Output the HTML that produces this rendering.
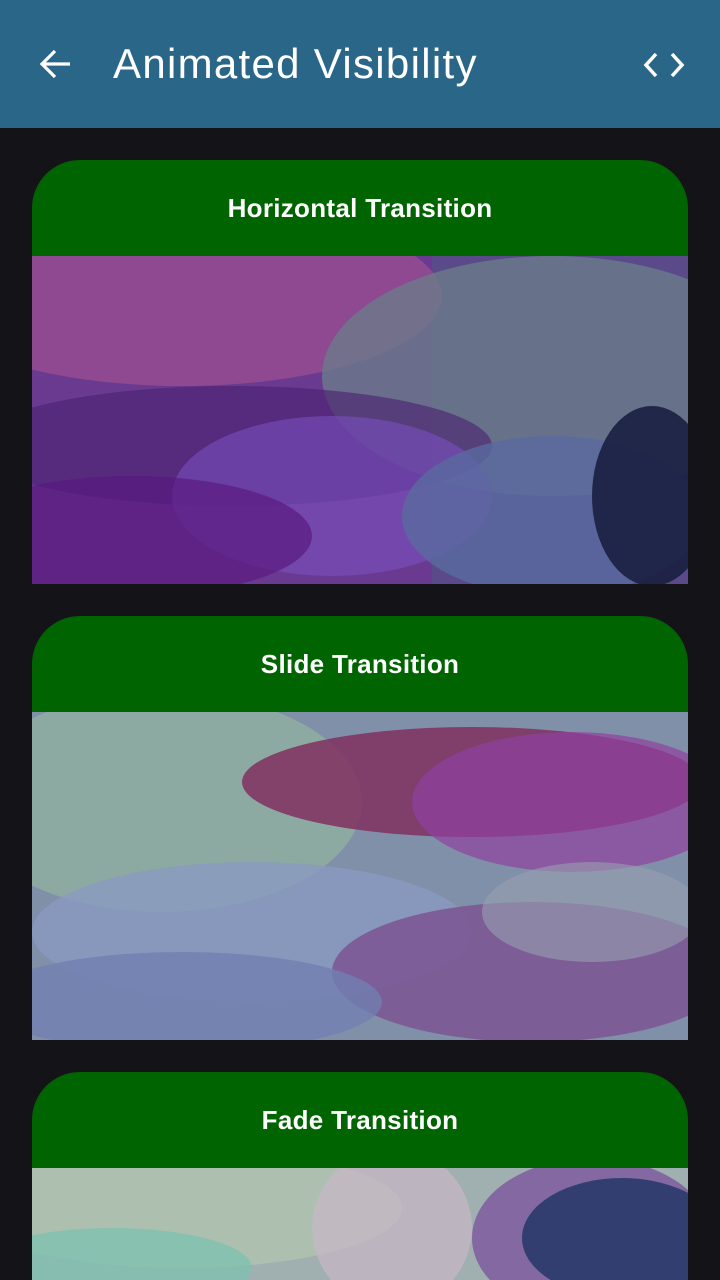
<!DOCTYPE html>
<html><head><meta charset="utf-8"><style>
body{margin:0;width:720px;height:1280px;overflow:hidden;background:#141318;font-family:"Liberation Sans",sans-serif;position:relative}
.bar{position:absolute;left:0;top:0;width:720px;height:128px;background:#2a6688}
.title{position:absolute;left:113px;top:40px;color:#fff;font-size:42px;letter-spacing:1.3px}
.card{position:absolute;left:32px;width:656px;overflow:hidden;border-radius:48px 48px 0 0}
.hd{height:96px;background:#006400;color:#fff;font-size:26px;font-weight:bold;text-align:center;line-height:96px;letter-spacing:0.3px}
.card svg{display:block}
</style></head><body>
<div class="bar">
<svg style="position:absolute;left:36px;top:44px" width="40" height="40" viewBox="0 0 40 40"><path d="M34 20H7M19 7L6 20l13 13" stroke="#fff" stroke-width="3.2" fill="none"/></svg>
<div class="title">Animated Visibility</div>
<svg style="position:absolute;left:642px;top:50px" width="44" height="30" viewBox="0 0 44 30"><path d="M14 4L4 15l10 11M30 4l10 11-10 11" stroke="#fff" stroke-width="3.5" fill="none"/></svg>
</div>

<div class="card" style="top:160px;height:424px">
<div class="hd">Horizontal Transition</div>
<svg width="656" height="328" viewBox="0 0 656 328">
<rect width="656" height="328" fill="#5a4a8a"/>
<rect x="0" y="0" width="400" height="328" fill="#6a3a90"/>
<ellipse cx="150" cy="40" rx="260" ry="90" fill="#a05090" opacity=".7"/>
<ellipse cx="520" cy="120" rx="230" ry="120" fill="#6a7a8a" opacity=".8"/>
<ellipse cx="200" cy="190" rx="260" ry="60" fill="#4a2070" opacity=".6"/>
<ellipse cx="300" cy="240" rx="160" ry="80" fill="#7a50c0" opacity=".6"/>
<ellipse cx="520" cy="260" rx="150" ry="80" fill="#5a6aa0" opacity=".8"/>
<ellipse cx="620" cy="240" rx="60" ry="90" fill="#1a1f40" opacity=".9"/>
<ellipse cx="100" cy="280" rx="180" ry="60" fill="#5a1a80" opacity=".7"/>
</svg></div>

<div class="card" style="top:616px;height:424px">
<div class="hd">Slide Transition</div>
<svg width="656" height="328" viewBox="0 0 656 328">
<rect width="656" height="328" fill="#8090a8"/>
<ellipse cx="130" cy="90" rx="200" ry="110" fill="#90b0a0" opacity=".8"/>
<ellipse cx="440" cy="70" rx="230" ry="55" fill="#803060" opacity=".85"/>
<ellipse cx="540" cy="90" rx="160" ry="70" fill="#9040a0" opacity=".7"/>
<ellipse cx="220" cy="220" rx="220" ry="70" fill="#8a9ac0" opacity=".8"/>
<ellipse cx="500" cy="260" rx="200" ry="70" fill="#7a5090" opacity=".8"/>
<ellipse cx="150" cy="290" rx="200" ry="50" fill="#7080b0" opacity=".8"/>
<ellipse cx="560" cy="200" rx="110" ry="50" fill="#9aa0b0" opacity=".6"/>
</svg></div>

<div class="card" style="top:1072px;height:208px">
<div class="hd">Fade Transition</div>
<svg width="656" height="112" viewBox="0 0 656 112">
<rect width="656" height="112" fill="#a0b0b0"/>
<ellipse cx="150" cy="40" rx="220" ry="60" fill="#b0c4b0" opacity=".8"/>
<ellipse cx="80" cy="100" rx="140" ry="40" fill="#80c0b0" opacity=".8"/>
<ellipse cx="360" cy="60" rx="80" ry="80" fill="#c8b8c8" opacity=".7"/>
<ellipse cx="560" cy="70" rx="120" ry="80" fill="#8060a0" opacity=".9"/>
<ellipse cx="590" cy="70" rx="100" ry="60" fill="#2a3a6a" opacity=".9"/>
</svg></div>
</body></html>
